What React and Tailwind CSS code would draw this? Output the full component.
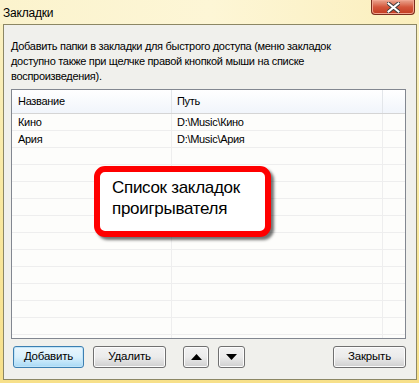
import React from 'react';

const rows = [
  { name: 'Кино', path: 'D:\\Music\\Кино' },
  { name: 'Ария', path: 'D:\\Music\\Ария' },
];

function Btn({ children, primary, className = '' }) {
  return (
    <button
      className={
        'h-[22px] rounded-[3px] border text-[11.5px] tracking-[-0.2px] text-black leading-none flex items-center justify-center ' +
        (primary
          ? 'border-[#3c7fb1] bg-gradient-to-b from-[#eaf6fd] via-[#d9f0fc] to-[#a7d9f5] shadow-[inset_0_0_0_1px_#c0e4f8]'
          : 'border-[#707070] bg-gradient-to-b from-[#f2f2f2] via-[#ebebeb] to-[#cfcfcf] shadow-[inset_0_0_0_1px_#fcfcfc]') +
        ' ' +
        className
      }
    >
      {children}
    </button>
  );
}

export default function App() {
  const empty = Array.from({ length: 12 });
  return (
    <div
      className="w-[419px] h-[383px] flex flex-col bg-gradient-to-b from-[#fbf2c6] via-[#f9e9a2] to-[#f7e08a] overflow-hidden"
      style={{ fontFamily: '"Liberation Sans", "DejaVu Sans", sans-serif' }}
    >
      {/* Title bar */}
      <div className="h-[24px] flex items-start justify-between pl-[3px] pr-[4px] bg-gradient-to-r from-[#fbf3cd] via-[#fdf6d6] to-[#fbefbd]">
        <span className="text-[12px] tracking-[-0.2px] text-black mt-[4px]">Закладки</span>
        <div className="w-[44px] h-[15px] rounded-b-[4px] border border-t-0 border-[#7a2d1d] bg-gradient-to-b from-[#e9a48f] via-[#d4563b] to-[#c23a20] flex items-center justify-center shadow-[inset_0_0_0_1px_#f0a590]">
          <svg width="13" height="11" viewBox="0 0 13 11">
            <path
              d="M1.5 1.5 L11.5 9.5 M11.5 1.5 L1.5 9.5"
              stroke="#3b3b3b"
              strokeWidth="4"
              strokeLinecap="square"
            />
            <path
              d="M1.5 1.5 L11.5 9.5 M11.5 1.5 L1.5 9.5"
              stroke="#ffffff"
              strokeWidth="2"
              strokeLinecap="square"
            />
          </svg>
        </div>
      </div>

      {/* Client panel */}
      <div className="flex-1 ml-[3px] mr-[2px] mb-[3px] border border-[#8c8764] bg-[#f0f0ec] flex flex-col pl-[7px] pr-[10px] pt-[14px]">
        <p className="text-[11px] leading-[15px] tracking-[-0.3px] text-black whitespace-nowrap">
          Добавить папки в закладки для быстрого доступа (меню закладок
          <br />
          доступно также при щелчке правой кнопкой мыши на списке
          <br />
          воспроизведения).
        </p>

        {/* List */}
        <div className="relative mt-[5px] h-[250px] border border-[#828790] bg-[#fdfdfb] overflow-hidden text-[11px] tracking-[-0.3px] text-black">
          <div className="flex h-[24px] border-b border-[#d5d5d5] bg-gradient-to-b from-[#ffffff] to-[#f1f5fb]">
            <div className="w-[160px] pl-[6px] flex items-center border-r border-[#e3e6ea]">Название</div>
            <div className="w-[211px] pl-[5px] flex items-center border-r border-[#e3e6ea]">Путь</div>
            <div className="flex-1" />
          </div>
          {rows.map((r) => (
            <div key={r.name} className="flex h-[17px] border-b border-[#eeeeee]">
              <div className="w-[160px] pl-[6px] flex items-center border-r border-[#eeeeee]">{r.name}</div>
              <div className="w-[211px] pl-[5px] flex items-center border-r border-[#eeeeee]">{r.path}</div>
              <div className="flex-1" />
            </div>
          ))}
          {empty.map((_, i) => (
            <div key={i} className="flex h-[17px] border-b border-[#eeeeee]">
              <div className="w-[160px] border-r border-[#eeeeee]" />
              <div className="w-[211px] border-r border-[#eeeeee]" />
              <div className="flex-1" />
            </div>
          ))}

          {/* Callout */}
          <div className="absolute left-[82px] top-[76px] w-[177px] h-[71px] rounded-[11px] border-[6px] border-[#ff0000] bg-white shadow-[3px_3px_3px_rgba(0,0,0,0.55)] pl-[12px] pt-[5px]">
            <p className="text-[17px] leading-[21px] text-black">
              Список закладок
              <br />
              проигрывателя
            </p>
          </div>
        </div>

        {/* Buttons */}
        <div className="flex items-center mt-[7px] pl-[2px]">
          <Btn primary className="w-[71px]">Добавить</Btn>
          <Btn className="w-[73px] ml-[9px]">Удалить</Btn>
          <Btn className="w-[26px] ml-[17px]">
            <svg width="11" height="6" viewBox="0 0 11 6"><path d="M5.5 0 L11 6 L0 6 Z" fill="#000" /></svg>
          </Btn>
          <Btn className="w-[27px] ml-[9px]">
            <svg width="11" height="6" viewBox="0 0 11 6"><path d="M0 0 L11 0 L5.5 6 Z" fill="#000" /></svg>
          </Btn>
          <Btn className="w-[73px] ml-auto">Закрыть</Btn>
        </div>
      </div>
    </div>
  );
}
